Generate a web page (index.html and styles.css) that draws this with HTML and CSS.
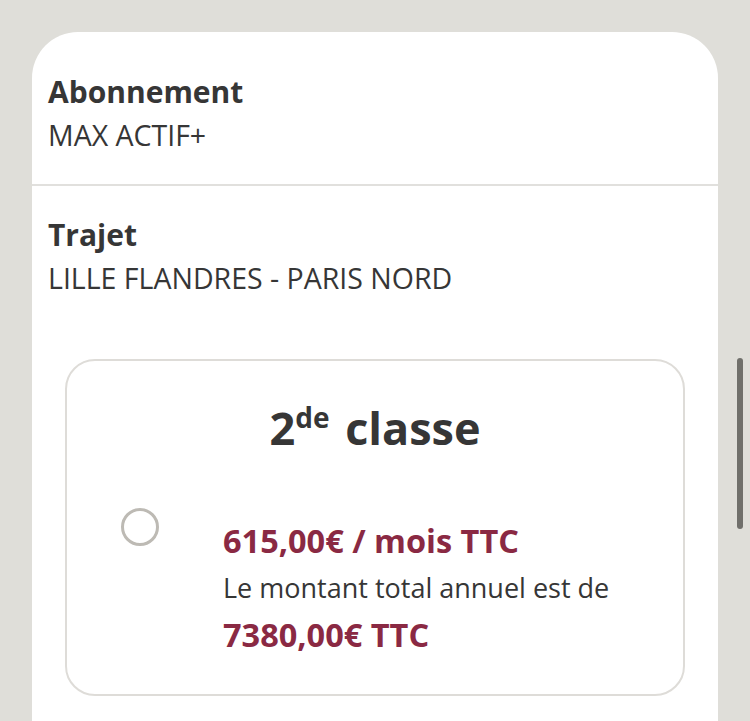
FILE: index.html
```html
<!DOCTYPE html>
<html lang="fr">
<head>
<meta charset="UTF-8">
<title>Abonnement</title>
<link rel="stylesheet" href="styles.css">
</head>
<body>
    <div class="panel">
        <div class="section">
            <p class="label">Abonnement</p>
            <p class="value">MAX ACTIF+</p>
        </div>
        <div class="section section-last">
            <p class="label">Trajet</p>
            <p class="value">LILLE FLANDRES - PARIS NORD</p>

            <div class="offer">
                <p class="offer-title">2<sup>de</sup> classe</p>
                <label class="offer-row">
                    <span class="radio"></span>
                    <span class="offer-text">
                        <span class="price">615,00€ / mois TTC</span>
                        <span class="note">Le montant total annuel est de</span>
                        <span class="price">7380,00€ TTC</span>
                    </span>
                </label>
            </div>
        </div>
    </div>

    <div class="scrollbar"></div>
</body>
</html>
```

FILE: styles.css
```css
body {
    margin: 0;
    padding: 32px 32px 0 32px;
    background-color: #dfded9;
    color: #363636;
    font-family: 'Open Sans', 'Noto Sans', sans-serif;
    height: 721px;
    box-sizing: border-box;
    overflow: hidden;
}

.panel {
    background: #ffffff;
    border-radius: 46px 46px 0 0;
    min-height: 100%;
}

.section {
    padding: 42px 16px 32px 16px;
    border-bottom: 2px solid #e1e0dd;
}

.section-last {
    padding-top: 31px;
    border-bottom: none;
}

.section p {
    margin: 0;
}

.label {
    font-size: 30px;
    line-height: 36px;
    font-weight: 700;
}

.value {
    font-size: 28.5px;
    line-height: 34px;
    margin-top: 8px !important;
}

/* carte de l'offre */
.offer {
    margin: 64px 17px 0 17px;
    border: 2px solid #dedcd8;
    border-radius: 30px;
    padding: 42px 20px 40px 54px;
}

.offer-title {
    font-size: 45px;
    line-height: 50px;
    font-weight: 700;
    text-align: center;
    padding-right: 34px;
}

.offer-title sup {
    font-size: 28px;
    line-height: 0;
    vertical-align: 0.6em;
    margin-right: 4px;
}

.offer-row {
    display: flex;
    align-items: flex-start;
    margin-top: 55px;
    cursor: pointer;
}

.radio {
    width: 38px;
    height: 38px;
    border: 3px solid #bdbab4;
    border-radius: 50%;
    box-sizing: border-box;
    flex-shrink: 0;
}

.offer-text {
    display: flex;
    flex-direction: column;
    gap: 12px;
    padding-top: 14px;
    margin-left: 64px;
}

.price {
    color: #8a2943;
    font-size: 32.5px;
    line-height: 38px;
    font-weight: 700;
}

.note {
    font-size: 27px;
    line-height: 32px;
}

.scrollbar {
    position: fixed;
    top: 358px;
    left: 737px;
    width: 6px;
    height: 171px;
    border-radius: 3px;
    background: #706f6b;
}
```
